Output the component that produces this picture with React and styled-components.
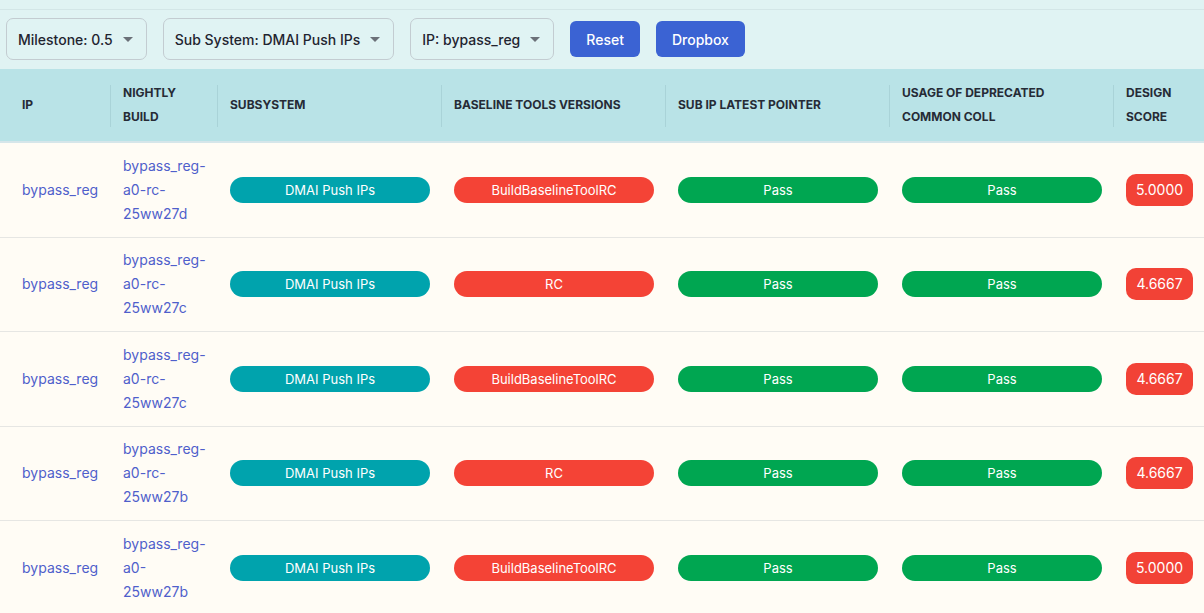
import React from "react";
import styled, { createGlobalStyle } from "styled-components";

const GlobalStyle = createGlobalStyle`
  html, body {
    margin: 0;
    padding: 0;
    background: #fffcf5;
    font-family: Inter, "Noto Sans", sans-serif;
    overflow: hidden;
  }
`;

const rows = [
  { ip: "bypass_reg", build: ["bypass_reg-", "a0-rc-", "25ww27d"], baseline: "BuildBaselineToolRC", score: "5.0000" },
  { ip: "bypass_reg", build: ["bypass_reg-", "a0-rc-", "25ww27c"], baseline: "RC", score: "4.6667" },
  { ip: "bypass_reg", build: ["bypass_reg-", "a0-rc-", "25ww27c"], baseline: "BuildBaselineToolRC", score: "4.6667" },
  { ip: "bypass_reg", build: ["bypass_reg-", "a0-rc-", "25ww27b"], baseline: "RC", score: "4.6667" },
  { ip: "bypass_reg", build: ["bypass_reg-", "a0-", "25ww27b"], baseline: "BuildBaselineToolRC", score: "5.0000" },
];

const columns = [
  { label: ["IP"], width: 110 },
  { label: ["Nightly", "Build"], width: 107 },
  { label: ["Subsystem"], width: 224 },
  { label: ["Baseline Tools Versions"], width: 224 },
  { label: ["Sub IP Latest Pointer"], width: 224 },
  { label: ["Usage of Deprecated", "Common Coll"], width: 224 },
  { label: ["Design", "Score"], width: 120 },
];

const Page = styled.div`
  width: 1204px;
  overflow: hidden;
`;

const TopStrip = styled.div`
  height: 9px;
  background: #e0f3f3;
  border-bottom: 1px solid #d3e6e7;
`;

const Toolbar = styled.div`
  display: flex;
  align-items: center;
  gap: 16px;
  padding: 8px 6px 9px;
  background: #e0f3f3;
`;

const Select = styled.div`
  display: flex;
  align-items: center;
  gap: 10px;
  height: 42px;
  box-sizing: border-box;
  padding: 0 13px 0 11px;
  border: 1px solid #c3ccd1;
  border-radius: 7px;
  font-size: 14px;
  font-weight: 500;
  color: #1f2430;
`;

const Caret = styled.span`
  width: 0;
  height: 0;
  border-left: 5px solid transparent;
  border-right: 5px solid transparent;
  border-top: 5px solid #6b7078;
  margin-top: 1px;
`;

const Button = styled.button`
  height: 36px;
  padding: 0 16px;
  border: none;
  border-radius: 6px;
  background: #3b63d3;
  color: #fff;
  font-family: inherit;
  font-size: 14px;
  font-weight: 500;
`;

const Table = styled.table`
  border-collapse: collapse;
  table-layout: fixed;
  width: ${(p) => p.$width}px;
`;

const HeadRow = styled.tr`
  background: #b9e3e7;
  border-bottom: 2px solid #d6e6ea;
`;

const Th = styled.th`
  position: relative;
  height: 72px;
  padding: 0 0 0 ${(p) => (p.$first ? 22 : 13)}px;
  text-align: left;
  font-size: 12px;
  font-weight: 700;
  line-height: 24px;
  color: #262b36;
  text-transform: uppercase;
  vertical-align: middle;

  &::before {
    content: "";
    display: ${(p) => (p.$first ? "none" : "block")};
    position: absolute;
    left: 0;
    top: 16px;
    bottom: 14px;
    width: 1px;
    background: #a9d3d8;
  }
`;

const Row = styled.tr`
  background: #fffcf5;
  border-bottom: 1px solid #e6e6e3;
`;

const Td = styled.td`
  height: 93.5px;
  padding: 0 0 0 ${(p) => (p.$first ? 22 : 13)}px;
  vertical-align: middle;
  font-size: 14px;
  line-height: 24px;
`;

const LinkText = styled.a`
  color: #4f5fcb;
  text-decoration: none;
  display: block;
`;

const Pill = styled.div`
  width: 200px;
  height: 26px;
  border-radius: 13px;
  background: ${(p) => p.$color};
  color: #fff;
  font-size: 13px;
  font-weight: 400;
  line-height: 26px;
  text-align: center;
`;

const Score = styled.div`
  display: inline-block;
  width: 67px;
  height: 32px;
  border-radius: 10px;
  background: #f24236;
  color: #fff;
  font-size: 14px;
  font-weight: 400;
  line-height: 32px;
  text-align: center;
`;

const COLORS = {
  teal: "#00a3ad",
  red: "#f44336",
  green: "#00a651",
};

export default function App() {
  const tableWidth = columns.reduce((s, c) => s + c.width, 0);
  return (
    <Page>
      <GlobalStyle />
      <TopStrip />
      <Toolbar>
        <Select>Milestone: 0.5 <Caret /></Select>
        <Select>Sub System: DMAI Push IPs <Caret /></Select>
        <Select>IP: bypass_reg <Caret /></Select>
        <Button>Reset</Button>
        <Button>Dropbox</Button>
      </Toolbar>
      <Table $width={tableWidth}>
        <colgroup>
          {columns.map((c, i) => (
            <col key={i} style={{ width: c.width }} />
          ))}
        </colgroup>
        <thead>
          <HeadRow>
            {columns.map((c, i) => (
              <Th key={i} $first={i === 0}>
                {c.label.map((l, j) => (
                  <div key={j}>{l}</div>
                ))}
              </Th>
            ))}
          </HeadRow>
        </thead>
        <tbody>
          {rows.map((r, i) => (
            <Row key={i}>
              <Td $first>
                <LinkText>{r.ip}</LinkText>
              </Td>
              <Td>
                <LinkText>
                  {r.build.map((b, j) => (
                    <div key={j}>{b}</div>
                  ))}
                </LinkText>
              </Td>
              <Td>
                <Pill $color={COLORS.teal}>DMAI Push IPs</Pill>
              </Td>
              <Td>
                <Pill $color={COLORS.red}>{r.baseline}</Pill>
              </Td>
              <Td>
                <Pill $color={COLORS.green}>Pass</Pill>
              </Td>
              <Td>
                <Pill $color={COLORS.green}>Pass</Pill>
              </Td>
              <Td>
                <Score>{r.score}</Score>
              </Td>
            </Row>
          ))}
        </tbody>
      </Table>
    </Page>
  );
}
